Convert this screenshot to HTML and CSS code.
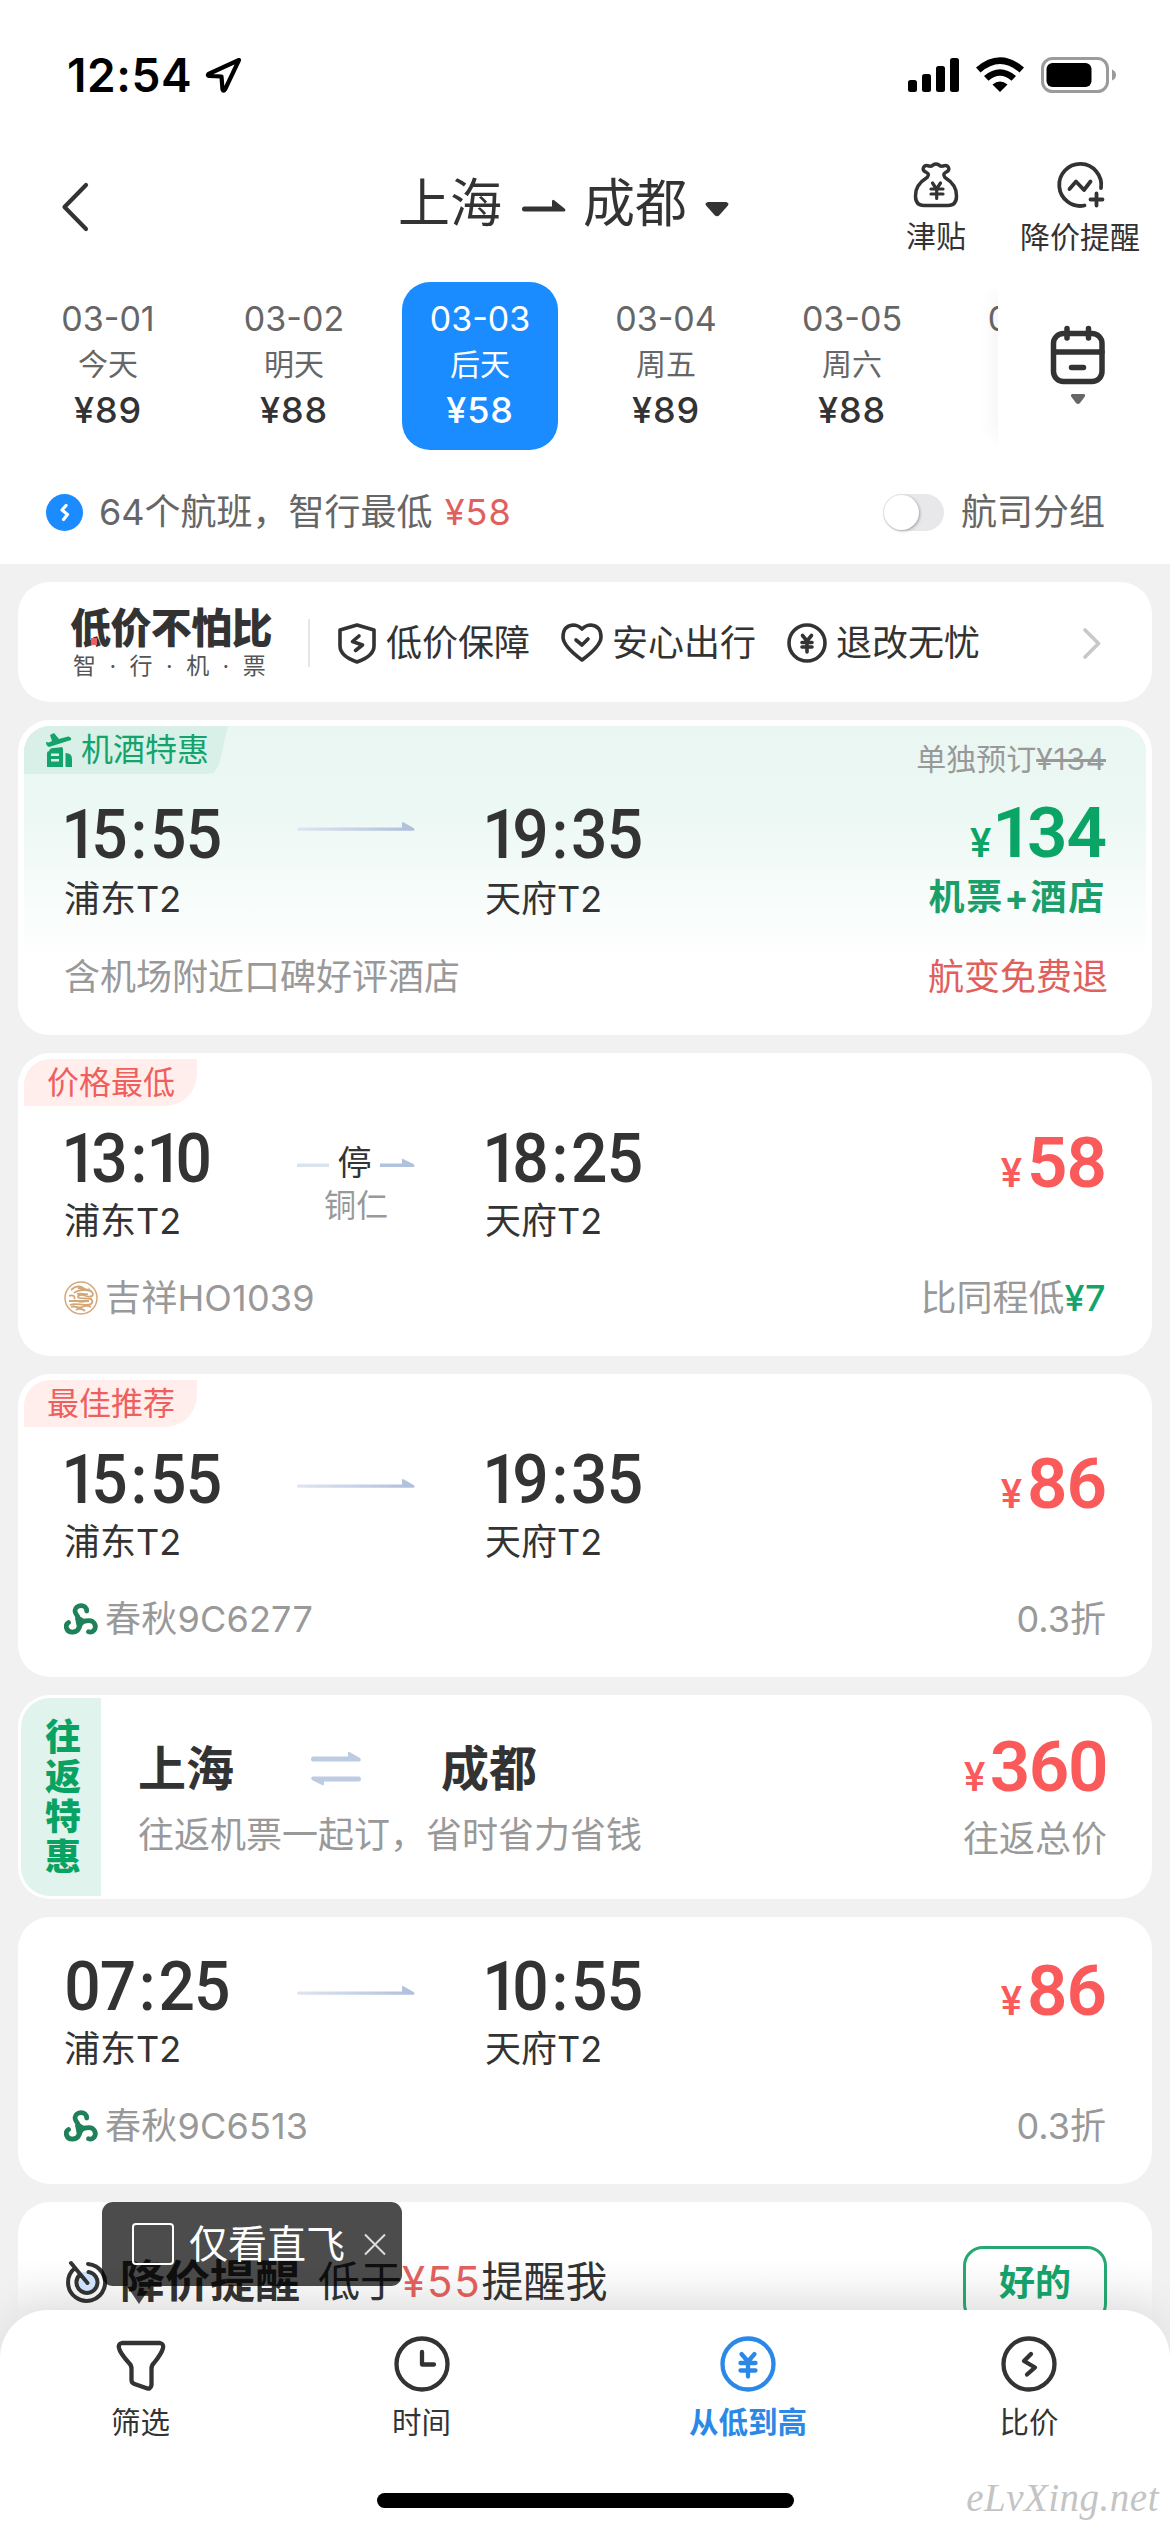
FILE: index.html
```html
<!DOCTYPE html>
<html lang="zh-CN">
<head>
<meta charset="utf-8">
<title>上海 - 成都 航班</title>
<link rel="stylesheet" href="styles.css">
</head>
<body>
<svg class="defs" width="0" height="0" aria-hidden="true">
  <defs>
    <linearGradient id="fade" x1="0" y1="0" x2="118" y2="0" gradientUnits="userSpaceOnUse"><stop offset="0" stop-color="#dfe5f0"/><stop offset="1" stop-color="#aebfdb"/></linearGradient>
    <symbol id="route" viewBox="0 0 118 9"><path d="M1.5 5.5H105V.6Q105.4-.2 106.500 .2L116.500 6Q119 8.600 116 8.800H1.500Q0 8.500 0 7.200Q0 5.500 1.500 5.500Z" fill="url(#fade)"/></symbol>
    <symbol id="spring" viewBox="0 0 34 32"><g fill="none" stroke="#1f8159" stroke-width="4.800" stroke-linecap="round"><path d="M14.500 18.500C16 13 10.500 12 11 7.500C11.800 1.500 22.500 .5 22.700 8"/><path d="M15 16.500C17.500 21 15.500 28.500 9 29C2 29.500 .5 22 4.500 19.500"/><path d="M15.500 18C21 20 24 15.500 28.500 18.500C34 23 30.500 30.500 24.500 28.800"/></g><path d="M11 15l6-1 6 4-6 6-4 1z" fill="#1f8159"/></symbol>
    <symbol id="juneyao" viewBox="0 0 34 34"><g fill="none" stroke="#d3a878"><circle cx="17" cy="17" r="16" stroke-width="1.500"/><path d="M7 9c5-5 10-4 12-2s6 1 9 4M5 15c4-2 7 1 5 3M10 12c5-4 12-3 17-2 4 4 1 7-5 5-5-2-8-1-8 1s7 1 13 2c3 3 1 6-5 6-7-1-13-2-16 0M5 20h20M7 26c5-2 7 2 11 0s7-1 9 0M12 29c3-2 7-1 9 1M14 7c5 1 8 3 12 1M13 13c4-1 8 1 11 0M13 20c5 2 8 0 12 0" stroke-width="1.800"/></g></symbol>
  </defs>
</svg>

<header class="top">
  <div class="status">
    <span class="clock">12:54</span>
    <svg class="locate" width="37" height="36" viewBox="0 0 37 36"><path d="M34 3L3.500 17Q2 18.500 4 18.800L16.500 19.500L17.500 32.500Q18.500 35 20 32.500Z" fill="none" stroke="#000" stroke-width="4.200" stroke-linejoin="round"/></svg>
    <div class="signals">
      <svg width="51" height="34" viewBox="0 0 51 34"><rect x="0" y="22" width="9" height="12" rx="2.500"/><rect x="14" y="16" width="9" height="18" rx="2.500"/><rect x="28" y="8" width="9" height="26" rx="2.500"/><rect x="42" y="0" width="9" height="34" rx="2.500"/></svg>
      <svg width="48" height="35" viewBox="0 0 48 35"><path d="M0 10.500Q24-10 48 10.500L43.500 15.500Q24-1.500 4.500 15.500ZM8 19Q24 5.500 40 19L35.500 23.700Q24 14 12.500 23.700ZM16.500 27.500Q24 21.500 31.500 27.500L24 35Z"/></svg>
      <svg width="75" height="36" viewBox="0 0 75 36"><rect x="1.500" y="1.500" width="65" height="33" rx="10" fill="none" stroke="#9b9b9b" stroke-width="3"/><rect x="5.500" y="6" width="45" height="24" rx="6"/><path d="M71 12.500Q75 14 75 18Q75 22 71 23.500Z" fill="#9b9b9b"/></svg>
    </div>
  </div>

  <nav class="nav">
    <svg class="back" width="27" height="48" viewBox="0 0 27 48"><path d="M25 2L3.500 24L25 46" fill="none" stroke="#333" stroke-width="4.200" stroke-linecap="round" stroke-linejoin="round"/></svg>
    <h1 class="title">
      <span>上海</span>
      <svg width="44" height="12" viewBox="0 0 44 12"><path d="M2.500 6.500H30V1Q31-1 32.500 .5L42.500 8.500Q45 11 41.500 11.500H2.500Q0 11.500 0 9Q0 6.500 2.500 6.500Z" fill="#333"/></svg>
      <span>成都</span>
      <svg class="caret" width="24" height="15" viewBox="0 0 24 15"><path d="M3 0H21Q25 1 22.500 4L14.500 13Q12 15.500 9.500 13L1.500 4Q-1 1 3 0Z" fill="#333"/></svg>
    </h1>
    <div class="actions">
      <div class="action">
        <svg width="46" height="46" viewBox="0 0 46 46" fill="none" stroke="#333" stroke-width="3.500" stroke-linecap="round" stroke-linejoin="round"><path d="M14 15.500Q17 12 13.500 10.500Q9 8.500 10.500 5.500Q12 2.500 16 4Q19 4.500 20 3Q23 1 26 3Q27 4.500 30 4Q34 2.500 35.500 5.500Q37 8.500 32.500 10.500Q29.500 12 32 15.500Q44 23 43.500 34Q43.500 43.500 35 43.500H11Q2.500 43.500 2.500 34Q2 23 14 15.500Z"/><path d="M19.500 21L23.500 27L27.500 21M18 27H30M18 32H30M23.700 27V36.500" stroke-width="3.200"/></svg>
        <span>津贴</span>
      </div>
      <div class="action">
        <svg width="48" height="46" viewBox="0 0 48 46" fill="none" stroke="#333" stroke-width="3.800" stroke-linecap="round" stroke-linejoin="round"><path d="M45 26A21 21 0 1 0 28.500 43.500"/><path d="M13.500 27L20 19.500L28 28L34.500 19.500M40.500 31.500V43.500M34.500 37.500H46.500"/></svg>
        <span>降价提醒</span>
      </div>
    </div>
  </nav>

  <div class="dates">
    <div class="strip">
      <div class="date"><span class="day">03-01</span><span class="week">今天</span><span class="low">¥89</span></div>
      <div class="date"><span class="day">03-02</span><span class="week">明天</span><span class="low">¥88</span></div>
      <div class="date active"><span class="day">03-03</span><span class="week">后天</span><span class="low">¥58</span></div>
      <div class="date"><span class="day">03-04</span><span class="week">周五</span><span class="low">¥89</span></div>
      <div class="date"><span class="day">03-05</span><span class="week">周六</span><span class="low">¥88</span></div>
      <div class="date"><span class="day">03-06</span></div>
    </div>
    <div class="calendar">
      <svg width="56" height="80" viewBox="0 0 56 80" fill="none" stroke="#333" stroke-width="5.500" stroke-linecap="round"><rect x="3.500" y="8.500" width="48.500" height="48" rx="10"/><path d="M17 3.500V13M38.500 3.500V13M4 27H52M21.500 42.500H33.500"/><path d="M22 69H34Q36 70 34.500 72L30 78Q28 80 26 78L21.500 72Q20 70 22 69Z" fill="#666" stroke="none"/></svg>
    </div>
  </div>

  <div class="summary">
    <svg width="37" height="37" viewBox="0 0 37 37"><circle cx="18.500" cy="18.500" r="18.500" fill="#1a8cff"/><path d="M20 11.500L16 16L21.500 20.500L17.500 25.500" fill="none" stroke="#fff" stroke-width="3.200" stroke-linecap="round" stroke-linejoin="round"/></svg>
    <p class="count">64个航班，智行最低 <b>¥58</b></p>
    <span class="switch"></span>
    <span>航司分组</span>
  </div>
</header>

<main class="list">
  <section class="card promise">
    <div class="slogan"><strong>低价不怕比</strong><small>智 · 行 · 机 · 票</small></div>
    <div class="points">
      <span class="point"><svg width="40" height="41" viewBox="0 0 40 41" fill="none" stroke="#333" stroke-width="3.600" stroke-linecap="round" stroke-linejoin="round"><path d="M20 2L37 7V23Q37 33 20 39Q3 33 3 23V7Z"/><path d="M22 13L15.500 18.500L25.500 22L18.500 27.500"/></svg>低价保障</span>
      <span class="point"><svg width="42" height="40" viewBox="0 0 42 40" fill="none" stroke="#333" stroke-width="3.600" stroke-linecap="round" stroke-linejoin="round"><path d="M21 6Q17 2 12 2Q2 3 2 14Q2 23 21 37Q40 23 40 14Q40 3 30 2Q25 2 21 6Z"/><path d="M15 17L21 22L27 16"/></svg>安心出行</span>
      <span class="point"><svg width="40" height="40" viewBox="0 0 40 40" fill="none" stroke="#333" stroke-width="3.600" stroke-linecap="round" stroke-linejoin="round"><circle cx="20" cy="20" r="18"/><path d="M15.500 12.500L20 18L24.500 12.500M15 19.500H25M15 24H25M20 19V29"/></svg>退改无忧</span>
    </div>
    <svg class="more" width="18" height="31" viewBox="0 0 18 31"><path d="M2 2L15.500 15.500L2 29" fill="none" stroke="#c8c8c8" stroke-width="3.600" stroke-linecap="round" stroke-linejoin="round"/></svg>
  </section>

  <section class="card bundle">
    <div class="head">
      <span class="deal"><svg width="26" height="34" viewBox="0 0 26 34" fill="#14a36b"><path d="M0 9L3 9.500L6 8L4 2L8 0L13 6L22 3.500Q26 4 25 7L3 14Q0 13 0 9Z"/><path fill-rule="evenodd" d="M3 18Q4 15 7 15L13 14.500Q17 13 17 16V34H1V20Q1 18.500 3 18ZM5 20.500V23H13V20.500ZM5 26V28.500H13V26Z"/><path d="M19.500 20Q26 20 26 26V34H19.500Z"/></svg>机酒特惠</span>
      <span class="solo">单独预订<s>¥134</s></span>
    </div>
    <div class="flight">
      <div class="leg"><time><u>1</u>5<i>:</i>55</time><span>浦东T2</span></div>
      <div class="route"><svg width="118" height="9"><use href="#route"/></svg></div>
      <div class="leg arrive"><time><u>1</u>9<i>:</i>35</time><span>天府T2</span></div>
      <div class="fare"><p class="price"><em>¥</em><u>1</u>34</p><span class="with">机票+酒店</span></div>
    </div>
    <div class="foot"><span>含机场附近口碑好评酒店</span><span class="refund">航变免费退</span></div>
  </section>

  <section class="card">
    <div class="head"><span class="label">价格最低</span></div>
    <div class="flight">
      <div class="leg"><time><u>1</u>3<i>:</i><u>1</u>0</time><span>浦东T2</span></div>
      <div class="route stop">
        <div class="via"><svg width="32" height="9"><path d="M0 5.500H32V9H0Z" fill="#dbe3ed"/></svg><span>停</span><svg width="35" height="9" viewBox="83 0 35 9"><path d="M83 5.500H105V.5L116.500 6Q119 8.800 116 9H83Z" fill="#b0c2dd"/></svg></div>
        <span class="city">铜仁</span>
      </div>
      <div class="leg arrive"><time><u>1</u>8<i>:</i>25</time><span>天府T2</span></div>
      <div class="fare"><p class="price"><em>¥</em>58</p></div>
    </div>
    <div class="foot"><span class="airline"><svg width="34" height="34"><use href="#juneyao"/></svg>吉祥HO1039</span><span>比同程低<b>¥7</b></span></div>
  </section>

  <section class="card">
    <div class="head"><span class="label">最佳推荐</span></div>
    <div class="flight">
      <div class="leg"><time><u>1</u>5<i>:</i>55</time><span>浦东T2</span></div>
      <div class="route"><svg width="118" height="9"><use href="#route"/></svg></div>
      <div class="leg arrive"><time><u>1</u>9<i>:</i>35</time><span>天府T2</span></div>
      <div class="fare"><p class="price"><em>¥</em>86</p></div>
    </div>
    <div class="foot"><span class="airline"><svg width="34" height="32"><use href="#spring"/></svg>春秋9C6277</span><span>0.3折</span></div>
  </section>

  <section class="card round">
    <div class="side"><span>往</span><span>返</span><span>特</span><span>惠</span></div>
    <div class="trip">
      <div class="cities"><span>上海</span>
        <svg width="50" height="34" viewBox="0 0 50 34"><path d="M2 4.500H37V.5Q38-.5 39 .3L49 6Q51 9 48 9.500H2Q0 9.500 0 7Q0 4.500 2 4.500ZM48 24.500H2Q-1 25 1 28L11 33Q13 34 13 32V29.500H48Q50 29.500 50 27Q50 24.500 48 24.500Z" fill="#bdcbe3"/></svg>
        <span>成都</span></div>
      <p class="note">往返机票一起订，省时省力省钱</p>
    </div>
    <div class="fare"><p class="price"><em>¥</em>360</p><span class="total">往返总价</span></div>
  </section>

  <section class="card plain">
    <div class="flight">
      <div class="leg"><time>07<i>:</i>25</time><span>浦东T2</span></div>
      <div class="route"><svg width="118" height="9"><use href="#route"/></svg></div>
      <div class="leg arrive"><time><u>1</u>0<i>:</i>55</time><span>天府T2</span></div>
      <div class="fare"><p class="price"><em>¥</em>86</p></div>
    </div>
    <div class="foot"><span class="airline"><svg width="34" height="32"><use href="#spring"/></svg>春秋9C6513</span><span>0.3折</span></div>
  </section>

  <section class="card alert">
    <svg width="42" height="42" viewBox="0 0 42 42" fill="none" stroke="#333" stroke-width="4" stroke-linecap="round"><circle cx="21" cy="21.500" r="11" fill="#cfe4ff" stroke="none"/><path d="M22 3A18.500 18.500 0 1 1 9 7M22.500 11A10.500 10.500 0 1 1 13.500 14M5 2L21.500 22"/></svg>
    <strong>降价提醒</strong>
    <span class="below">低于<b>¥55</b>提醒我</span>
    <span class="ok">好的</span>
  </section>
</main>

<div class="tip">
  <span class="box"></span><span>仅看直飞</span>
  <svg width="22" height="23" viewBox="0 0 22 23"><path d="M1 1.500L21 21.500M21 1.500L1 21.500" stroke="#ddd" stroke-width="2"/></svg>
</div>

<footer class="tabs">
  <div class="tab"><svg width="56" height="56" viewBox="0 0 56 56" fill="none" stroke="#333" stroke-width="4.300" stroke-linejoin="round"><path d="M9 7H47Q51 8 50 12Q49 17 41 27Q38.500 29 38.500 33V49Q37.500 54 33 52L21.500 48Q18.500 47 18.500 44V33Q18.500 29 16 27Q7 17 6 12Q5 8 9 7Z"/></svg><span>筛选</span></div>
  <div class="tab"><svg width="56" height="56" viewBox="0 0 56 56" fill="none" stroke="#333" stroke-width="4.300" stroke-linecap="round" stroke-linejoin="round"><circle cx="28" cy="28" r="25.500"/><path d="M28 16V28.500H40"/></svg><span>时间</span></div>
  <div class="tab wide on"><svg width="56" height="56" viewBox="0 0 56 56" fill="none" stroke="#2b88e6" stroke-width="4.300" stroke-linecap="round" stroke-linejoin="round"><circle cx="28" cy="28" r="25.500"/><path d="M21.500 18L28 25.500L34.500 18M20.500 27H35.500M20.500 34.500H35.500M28 27V40.500"/></svg><span>从低到高</span></div>
  <div class="tab last"><svg width="56" height="56" viewBox="0 0 56 56" fill="none" stroke="#333" stroke-width="4.300" stroke-linecap="round" stroke-linejoin="round"><circle cx="28" cy="28" r="25.500"/><path d="M30 18L23 25L34 31.500L26 38.500"/></svg><span>比价</span></div>
</footer>
<div class="home"></div>
<div class="mark">eLvXing.net</div>
</body>
</html>
```
FILE: styles.css
```css
* { box-sizing: border-box; margin: 0; padding: 0; }

body {
  position: relative;
  width: 1170px;
  height: 2532px;
  overflow: hidden;
  display: flex;
  flex-direction: column;
  background: #f1f1f1;
  color: #333;
  font: 400 36px/44px Inter, "Noto Sans CJK SC", sans-serif;
  white-space: nowrap;
}

svg { display: block; flex: none; overflow: visible; }
.defs { position: absolute; }
em, i { font-style: normal; }
u { text-decoration: none; }

.top { height: 564px; flex: none; background: #fff; }

/* status bar */
.status { display: flex; align-items: center; height: 149px; padding: 0 54px 0 67px; }
.clock { font-size: 46px; font-weight: 600; color: #000; letter-spacing: .6px; }
.locate { margin-left: 13px; }
.signals { display: flex; align-items: center; gap: 17px; margin-left: auto; }

/* title row */
.nav { display: flex; height: 133px; padding: 13px 30px 0 61px; }
.back { margin-top: 21px; }
.title { display: flex; align-items: center; height: 60px; margin: 12px 0 0 310px; font-size: 52px; font-weight: 400; }
.title svg { margin: 3px 17px 0 20px; }
.title .caret { margin: 10px 0 0 18px; }
.actions { display: flex; gap: 54px; margin-left: auto; }
.action { display: flex; flex-direction: column; align-items: center; gap: 8px; font-size: 30px; line-height: 40px; }
.action + .action { gap: 9px; }

/* date strip */
.dates { display: flex; height: 168px; }
.strip { display: flex; gap: 30px; width: 998px; padding-left: 30px; overflow: hidden; }
.date { display: flex; flex-direction: column; align-items: center; flex: none; width: 156px; padding-top: 13px; border-radius: 28px; color: #666; }
.day { font-size: 34px; line-height: 47px; }
.week { font-size: 30px; line-height: 45px; }
.low { font-size: 36px; line-height: 46px; font-weight: 500; letter-spacing: .8px; color: #333; }
.active, .active .low { color: #fff; }
.active { background: #1a8cff; }
.calendar { flex: 1; display: flex; justify-content: center; padding: 43px 12px 0 0; box-shadow: -18px 0 18px -14px rgba(0, 0, 0, .05); }

.summary { display: flex; align-items: center; height: 114px; padding: 10px 65px 0 46px; color: #666; }
.count { margin-left: 16px; }
.count b, .below b { font-weight: 400; color: #e0605e; letter-spacing: 1px; }
.count b { margin-left: 2px; }
.switch { width: 61px; height: 37px; margin: 0 17px 0 auto; border-radius: 19px; background: #e8e8ea; }
.switch::before { content: ""; display: block; width: 35px; height: 35px; margin: 1px; border-radius: 50%; background: #fff; box-shadow: 1px 1px 3px rgba(0, 0, 0, .3); }

/* result list */
.list { display: flex; flex-direction: column; gap: 18px; padding: 18px 18px 0; }
.card { flex: none; height: 303px; border-radius: 32px; background: #fff; }

.promise { display: flex; align-items: center; height: 120px; padding: 2px 51px 0 52px; }
.slogan { position: relative; display: flex; flex-direction: column; width: 240px; height: 48px; justify-content: center; border-right: 2px solid #e4e6e9; }
.slogan::after { content: ""; position: absolute; left: 21px; top: 19px; width: 6px; height: 7px; background: #e9605f; }
.slogan strong { margin-top: 2px; font-size: 41px; line-height: 42px; font-weight: 900; letter-spacing: -.6px; }
.slogan small { margin: 1px 0 0 3px; font-size: 23px; line-height: 32px; color: #555; word-spacing: 7px; }
.points { display: flex; gap: 31px; margin-left: 27px; }
.point { display: flex; align-items: center; gap: 9px; }
.more { margin-left: auto; }

.head { display: flex; justify-content: space-between; height: 74px; padding: 6px; }
.label { height: 47px; width: 173px; padding-left: 23px; border-radius: 26px 0 32px 0; background: #ffeeec; color: #ef5f5d; font-size: 32px; line-height: 47px; }
.deal { display: flex; align-items: center; gap: 9px; width: 204px; height: 48px; padding-left: 22px; background: #d8f0e7; clip-path: polygon(0 0, 100% 0, 95.500% 82%, 93% 97%, 90% 100%, 0 100%); border-radius: 26px 0 0 0; color: #14a36b; font-size: 32px; }
.solo { margin: 11px 40px 0 0; font-size: 30px; color: #999; }
.solo s { letter-spacing: .8px; }

.flight { display: flex; margin: 0 46px; height: 149px; }
.leg { display: flex; flex-direction: column; gap: 9px; width: 233px; }
.leg time { padding-top: 1px; font: 500 69px/62px Roboto, sans-serif; letter-spacing: -1px; transform: scaleX(.93); transform-origin: 2px 0; }
.leg i { display: inline-block; width: 25px; text-align: center; }
.leg u { margin: 0 -6px 0 -3px; }
.leg i + u { margin: 0 -7px 0 -4px; }
.route { width: 118px; margin-right: 70px; padding-top: 31px; }
.arrive { flex: 1; }
.fare { padding-top: 6px; text-align: right; }
.price { font: 600 71px/60px Roboto, sans-serif; letter-spacing: -1px; color: #fa5a5a; }
.price em { margin-right: 6px; font-size: 40px; font-weight: 500; }
.price u { margin: 0 -5px 0 -4px; }
.stop { padding-top: 16px; text-align: center; color: #999; font-size: 32px; line-height: 40px; }
.via { display: flex; justify-content: space-between; font-size: 34px; color: #333; }
.via svg { margin-top: 15px; }
.city { display: block; margin-top: 3px; }

.foot { display: flex; justify-content: space-between; margin: 0 46px; color: #999; }
.foot b { font-weight: 500; color: #14a36b; letter-spacing: .5px; }
.airline { display: flex; align-items: center; gap: 7px; letter-spacing: .2px; }

/* flight + hotel bundle */
.bundle { height: 315px; border: 6px solid #fff; background: linear-gradient(#e9f6f2, #ecf8f4 30%, #fff 82%) 0 0 / 100% 286px no-repeat #fff; }
.bundle .head { height: 77px; padding: 0; }
.bundle .flight, .bundle .foot { margin: 0 40px; }
.bundle .flight { height: 152px; }
.bundle .leg { gap: 11px; }
.bundle .route { padding-top: 19px; }
.bundle .fare { padding-top: 0; }
.bundle .price { color: #0aa566; }
.with { display: block; margin-top: 1px; font-weight: 700; color: #1a9f6b; letter-spacing: 1.800px; }
.foot .refund { margin-right: -2px; color: #e0605e; }

/* round trip */
.round { display: flex; height: 204px; padding: 3px; }
.side { display: flex; flex-direction: column; align-items: center; justify-content: center; width: 80px; padding-left: 4px; border-radius: 29px 0 0 29px; background: #e0f3ec; color: #08a363; font-size: 36px; line-height: 40px; font-weight: 900; }
.trip { flex: 1; padding: 43px 0 0 37px; }
.cities { display: flex; align-items: center; font-size: 48px; line-height: 56px; font-weight: 700; }
.cities svg { margin: 0 80px 0 77px; }
.note { margin-top: 16px; color: #999; }
.round .fare { padding: 39px 42px 0 0; }
.round .price { letter-spacing: -1.500px; }
.total { display: block; margin-top: 9px; color: #999; }

.plain { height: 267px; padding-top: 38px; }

.alert { display: flex; align-items: center; height: 160px; padding: 0 45px 0 48px; background: linear-gradient(#fff 35%, #f3f3f3 68%); }
.alert strong { margin-left: 12px; font-size: 45px; }
.below { margin-left: 18px; font-size: 42px; }
.below b { letter-spacing: 1.800px; }
.ok { width: 144px; height: 78px; margin: 5px 0 0 auto; border: 3px solid #25a872; border-radius: 20px; text-align: center; font-weight: 700; line-height: 68px; color: #14a36b; }

/* filter bubble above the tab bar */
.tip { position: absolute; left: 102px; top: 2202px; display: flex; align-items: center; width: 300px; height: 84px; padding-left: 30px; border-radius: 11px; background: rgba(0, 0, 0, .7); color: #fff; font-size: 39px; }
.tip::after { content: ""; position: absolute; left: 25px; top: 84px; border: 12px solid transparent; border-top: 18px solid rgba(0, 0, 0, .7); border-bottom: 0; }
.box { width: 42px; height: 42px; margin-right: 15px; border: 2.500px solid #fff; border-radius: 4px; }
.tip svg { margin-left: 19px; }

/* bottom bar */
.tabs { position: absolute; left: 0; right: 0; top: 2310px; display: flex; height: 222px; padding-top: 26px; border-radius: 48px 48px 0 0; background: #fff; box-shadow: 0 -8px 40px rgba(0, 0, 0, .08); }
.tab { display: flex; flex-direction: column; align-items: center; gap: 10px; width: 281px; font-size: 29.500px; line-height: 40px; }
.wide { width: 372px; }
.last { width: 190px; }
.on { color: #2b88e6; font-weight: 700; }
.home { position: absolute; left: 377px; top: 2493px; width: 417px; height: 15px; border-radius: 8px; background: #000; }
.mark { position: absolute; right: 11px; top: 2474px; font: italic 39px/48px "Liberation Serif", serif; color: #c4c4c4; letter-spacing: .5px; }
```
